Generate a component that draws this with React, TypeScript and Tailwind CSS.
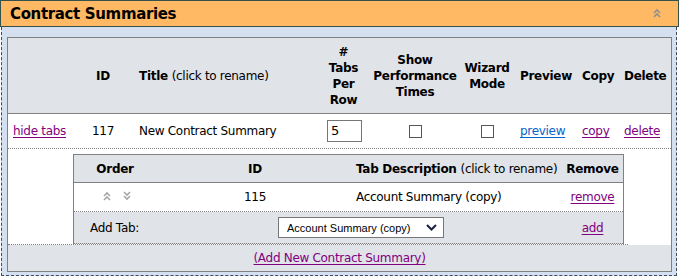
import React from 'react';

const cols = {
  c1: 'w-[65px] shrink-0',
  c2: 'w-[60px] shrink-0 text-center',
  c3: 'w-[182px] shrink-0 pl-[6px]',
  c4: 'w-[57px] shrink-0 text-center',
  c5: 'w-[86px] shrink-0 text-center',
  c6: 'w-[58px] shrink-0 text-center',
  c7: 'w-[62px] shrink-0 pl-[4px]',
  c8: 'w-[42px] shrink-0 pl-[4px]',
  c9: 'w-[51px] shrink-0 pl-[4px]',
};

const link = 'text-[#800080] underline underline-offset-[2px] cursor-pointer';

function DoubleChevron({ dir = 'up', color = '#a6a6a6' }: { dir?: 'up' | 'down'; color?: string }) {
  const d = dir === 'up' ? ['M1 5 L4 2 L7 5', 'M1 9 L4 6 L7 9'] : ['M1 1 L4 4 L7 1', 'M1 5 L4 8 L7 5'];
  return (
    <svg width="8" height="10" viewBox="0 0 8 10" fill="none">
      {d.map(p => (
        <path key={p} d={p} stroke={color} strokeWidth="1.6" />
      ))}
    </svg>
  );
}

function Checkbox() {
  return <div className="w-[13px] h-[13px] border border-[#555] bg-white" />;
}

export default function App() {
  return (
    <div className="w-[680px] h-[280px] bg-white text-black font-['DejaVu_Sans',sans-serif] text-[12px] tracking-[-0.3px] leading-[16px]">
      {/* ── Barra título ── */}
      <div className="w-[679px] h-[27px] border border-[#34514c] bg-[#ffb964] flex items-center justify-between pl-[9px] pr-[17px]">
        <span className="text-[15px] font-bold tracking-[-0.35px]">Contract Summaries</span>
        <div className="mt-[-1px]">
          <DoubleChevron dir="up" color="#8f8f8f" />
        </div>
      </div>

      {/* ── Cuerpo ── */}
      <div className="ml-[1px] w-[676px] h-[249px] border-x border-b border-dashed border-[#3b4b5b] bg-[#d4e0ef] pt-[10px] pl-[5px]">
        <div className="w-[665px] h-[235px] border border-[#808080] bg-[#e0e3e8] flex flex-col">
          {/* Cabecera */}
          <div className="h-[76px] flex items-center border-b border-[#808080] font-bold">
            <div className={cols.c1} />
            <div className={cols.c2}>ID</div>
            <div className={cols.c3}>
              Title <span className="font-normal">(click to rename)</span>
            </div>
            <div className={`${cols.c4} mt-[1px]`}>#<br />Tabs<br />Per<br />Row</div>
            <div className={cols.c5}>Show<br />Performance<br />Times</div>
            <div className={cols.c6}>Wizard<br />Mode</div>
            <div className={cols.c7}>Preview</div>
            <div className={cols.c8}>Copy</div>
            <div className={cols.c9}>Delete</div>
          </div>

          {/* Fila contrato */}
          <div className="h-[35px] flex items-center bg-white border-b border-dotted border-[#808080]">
            <div className={`${cols.c1} pl-[5px]`}>
              <span className={link}>hide tabs</span>
            </div>
            <div className={cols.c2}>117</div>
            <div className={cols.c3}>New Contract Summary</div>
            <div className={`${cols.c4} flex justify-center pl-[2px]`}>
              <div className="w-[35px] h-[22px] border border-[#767676] bg-white pl-[3px] text-left text-[13px] leading-[20px]">5</div>
            </div>
            <div className={`${cols.c5} flex justify-center`}><Checkbox /></div>
            <div className={`${cols.c6} flex justify-center`}><Checkbox /></div>
            <div className={cols.c7}>
              <span className="text-[#0b63c9] underline underline-offset-[2px]">preview</span>
            </div>
            <div className={cols.c8}><span className={link}>copy</span></div>
            <div className={cols.c9}><span className={link}>delete</span></div>
          </div>

          {/* Pestañas */}
          <div className="h-[96px] flex bg-white">
            <div className="w-[620px] shrink-0 border-b border-dotted border-[#808080] pl-[65px] pt-[5px]">
              <div className="w-[551px] border-x border-t border-[#808080] bg-[#e0e3e8]">
                <div className="h-[28px] flex items-center border-b border-[#808080] font-bold">
                  <div className="w-[82px] shrink-0 text-center">Order</div>
                  <div className="w-[198px] shrink-0 text-center">ID</div>
                  <div className="w-[208px] shrink-0 pl-[2px]">
                    Tab Description <span className="font-normal">(click to rename)</span>
                  </div>
                  <div className="w-[61px] shrink-0 text-center">Remove</div>
                </div>
                <div className="h-[29px] flex items-center bg-white border-b border-dotted border-[#808080]">
                  <div className="w-[82px] shrink-0 flex items-center gap-[12px] pl-[29px] mt-[-3px]">
                    <DoubleChevron dir="up" />
                    <DoubleChevron dir="down" />
                  </div>
                  <div className="w-[198px] shrink-0 text-center">115</div>
                  <div className="w-[208px] shrink-0 pl-[2px]">Account Summary (copy)</div>
                  <div className="w-[61px] shrink-0 text-center"><span className={link}>remove</span></div>
                </div>
                <div className="h-[32px] flex items-center border-b border-dotted border-[#808080]">
                  <div className="w-[204px] shrink-0 pl-[16px]">Add Tab:</div>
                  <div className="w-[166px] h-[21px] shrink-0 border border-[#767676] bg-white flex items-center justify-between pl-[8px] pr-[6px] font-['Liberation_Sans',sans-serif] text-[11px] tracking-normal">
                    <span>Account Summary (copy)</span>
                    <svg width="11" height="7" viewBox="0 0 11 7" fill="none">
                      <path d="M1 1 L5.5 5.5 L10 1" stroke="#1c1f45" strokeWidth="2" />
                    </svg>
                  </div>
                  <div className="w-[118px] shrink-0" />
                  <div className="w-[61px] shrink-0 text-center"><span className={link}>add</span></div>
                </div>
              </div>
            </div>
            <div className="flex-1" />
          </div>

          {/* Pie */}
          <div className="flex-1 flex items-center justify-center">
            <span className={link}>(Add New Contract Summary)</span>
          </div>
        </div>
      </div>
    </div>
  );
}
